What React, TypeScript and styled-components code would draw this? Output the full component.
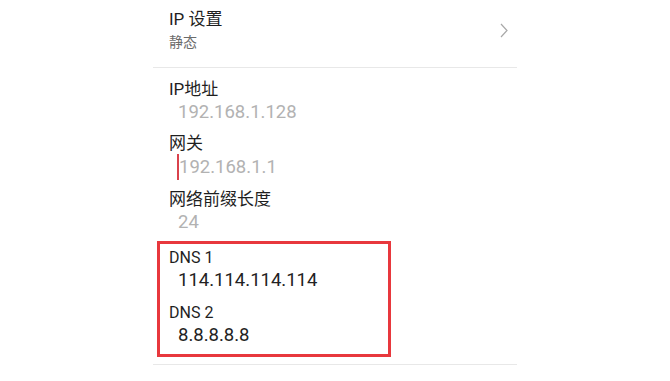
import {FC} from "react";
import styled, {createGlobalStyle} from "styled-components";

const GlobalStyle = createGlobalStyle`
    html, body {
        margin: 0;
        padding: 0;
        background: #ffffff;
    }

    body {
        font-family: Roboto, "Noto Sans CJK SC", "Noto Sans", sans-serif;
        color: #222;
    }
`;

interface FieldItem {
    label: string
    value: string
    muted?: boolean
    caret?: boolean
}

const fields: FieldItem[] = [
    {label: "IP地址", value: "192.168.1.128", muted: true},
    {label: "网关", value: "192.168.1.1", muted: true, caret: true},
    {label: "网络前缀长度", value: "24", muted: true},
];

const dns: FieldItem[] = [
    {label: "DNS 1", value: "114.114.114.114"},
    {label: "DNS 2", value: "8.8.8.8.8"},
];

const Page = styled.div`
    width: 364px;
    margin-left: 153px;
    display: flex;
    flex-direction: column;
`;

const SettingRow = styled.div`
    height: 67px;
    box-sizing: border-box;
    padding: 8px 9px 0 16px;
    display: flex;
    justify-content: space-between;
    align-items: flex-start;
`;

const SettingText = styled.div`
    display: flex;
    flex-direction: column;
`;

const SettingTitle = styled.div`
    font-size: 17px;
    line-height: 22px;
    color: #1f1f1f;
`;

const SettingSub = styled.div`
    margin-top: 3px;
    font-size: 14px;
    line-height: 18px;
    color: #6b6b6b;
`;

const Chevron = styled.svg`
    margin-top: 15px;
    width: 8px;
    height: 15px;
`;

const Divider = styled.div`
    height: 1px;
    background: #e8e8e8;
`;

const FieldList = styled.div`
    display: flex;
    flex-direction: column;
    gap: 9px;
    padding: 11px 0 0 16px;
`;

const Field = styled.div`
    display: flex;
    flex-direction: column;
`;

const Label = styled.div<{ $small?: boolean }>`
    font-size: ${p => p.$small ? "16px" : "17px"};
    line-height: 21px;
    color: #1f1f1f;
`;

const Value = styled.div<{ $muted?: boolean }>`
    padding-left: 9px;
    font-size: 18.5px;
    line-height: 24px;
    color: ${p => p.$muted ? "#b2b2b2" : "#222"};
    display: flex;
    align-items: center;
`;

const Caret = styled.span`
    display: inline-block;
    width: 2px;
    height: 26px;
    margin-left: -1px;
    background: #d9424c;
`;

const Highlight = styled.div`
    width: 234px;
    box-sizing: border-box;
    margin: 7px 0 7px 4px;
    border: 3px solid #e8383d;
    padding: 3px 0 7px 9px;
    display: flex;
    flex-direction: column;
    gap: 10px;
`;

const App: FC = () => {
    return (
        <>
            <GlobalStyle/>
            <Page>
                <SettingRow>
                    <SettingText>
                        <SettingTitle>IP 设置</SettingTitle>
                        <SettingSub>静态</SettingSub>
                    </SettingText>
                    <Chevron viewBox="0 0 8 15">
                        <polyline points="1,1 7,7.5 1,14" fill="none" stroke="#a8a8a8" strokeWidth="1.2"/>
                    </Chevron>
                </SettingRow>
                <Divider/>
                <FieldList>
                    {fields.map((item, index) => (
                        <Field key={index}>
                            <Label>{item.label}</Label>
                            <Value $muted={item.muted}>
                                {item.caret && <Caret/>}
                                {item.value}
                            </Value>
                        </Field>
                    ))}
                </FieldList>
                <Highlight>
                    {dns.map((item, index) => (
                        <Field key={index}>
                            <Label $small>{item.label}</Label>
                            <Value>{item.value}</Value>
                        </Field>
                    ))}
                </Highlight>
                <Divider/>
            </Page>
        </>
    );
};

export default App;
